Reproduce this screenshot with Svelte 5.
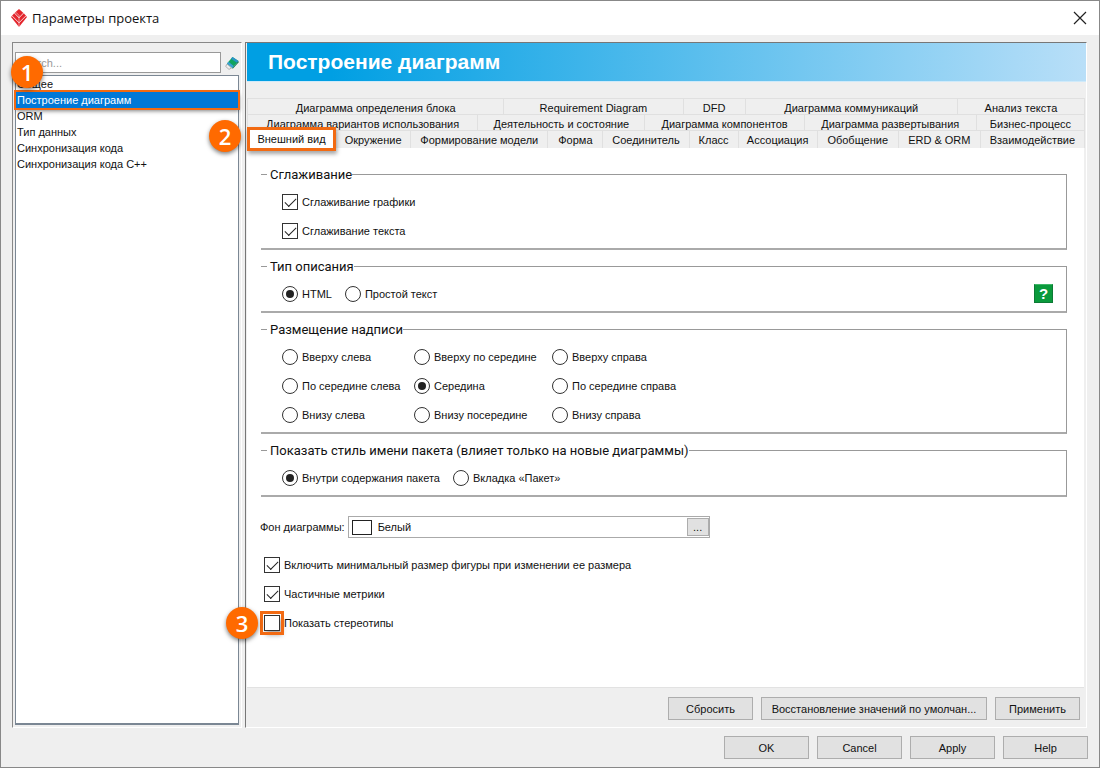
<script>
    let categories = ['Общее', 'Построение диаграмм', 'ORM', 'Тип данных', 'Синхронизация кода', 'Синхронизация кода C++'];
    let selectedCategory = 'Построение диаграмм';

    let tabRows = [
        ['Диаграмма определения блока', 'Requirement Diagram', 'DFD', 'Диаграмма коммуникаций', 'Анализ текста'],
        ['Диаграмма вариантов использования', 'Деятельность и состояние', 'Диаграмма компонентов', 'Диаграмма развертывания', 'Бизнес-процесс'],
        ['Внешний вид', 'Окружение', 'Формирование модели', 'Форма', 'Соединитель', 'Класс', 'Ассоциация', 'Обобщение', 'ERD & ORM', 'Взаимодействие']
    ];
    let selectedTab = 'Внешний вид';

    let positions = [
        'Вверху слева', 'Вверху по середине', 'Вверху справа',
        'По середине слева', 'Середина', 'По середине справа',
        'Внизу слева', 'Внизу посередине', 'Внизу справа'
    ];
    let position = 'Середина';
    let descriptionType = 'HTML';
    let packageStyle = 'Внутри содержания пакета';

    let search = '';
    let background = 'Белый';
    let graphicsAntialiasing = true;
    let textAntialiasing = true;
    let minimalSize = true;
    let partialMetrics = true;
    let showStereotypes = false;
</script>

<div class="window">
    <header class="titlebar">
        <svg class="logo" viewBox="0 0 16 18" aria-hidden="true">
            <path d="M8 0 L13 4.5 L16 8 L8 18 L0 8 L3 4.5 Z" fill="#e3262d" />
            <path d="M3.4 4 L8 8.8 L12.6 4 M1 6.8 L8 13.8 L15 6.8" fill="none" stroke="#fff" stroke-width="0.8" />
            <path d="M4.8 3.2 L8 6.4 V18" fill="none" stroke="#fff" stroke-width="0.5" />
        </svg>
        <h1>Параметры проекта</h1>
        <button class="close" aria-label="Close">
            <svg viewBox="0 0 14 14"><path d="M1 1 L13 13 M13 1 L1 13" stroke="#222" stroke-width="1.2" /></svg>
        </button>
    </header>

    <div class="body">
        <div class="panes">
            <aside class="sidebar">
                <div class="search">
                    <input type="text" placeholder="Search..." aria-label="Search" bind:value={search} />
                    <button class="clear" aria-label="Clear" on:click={() => search = ''}>
                        <svg viewBox="0 0 14 14">
                            <path d="M2 8 L0.7 10.5 L4 13.4 L6.5 12 Z" fill="#eee" stroke="#999" stroke-width="0.7" />
                            <path d="M2 7.5 L7.5 1 L13.5 5 L7.5 12 Z" fill="#0fa45f" />
                            <path d="M7.5 1 L13.5 5 L12 6.8 L6 2.8 Z" fill="#2a93c8" />
                            <path d="M2 7.5 L3.5 5.7 L9 10.2 L7.5 12 Z" fill="#3b9fd6" />
                            <path d="M13.5 5 L13.5 6.5 L7.5 13 L7.5 12 Z" fill="#08704a" />
                        </svg>
                    </button>
                </div>
                <span class="badge badge-list">1</span>
                <ul class="categories">
                    {#each categories as category}
                        <li class:selected={category === selectedCategory}>
                            <button on:click={() => selectedCategory = category}>{category}</button>
                        </li>
                    {/each}
                </ul>
            </aside>

            <main class="settings">
                <h2>{selectedCategory}</h2>

                <div class="tabs" role="tablist">
                    {#each tabRows as row, i}
                        <div class="tab-row row-{i + 1}">
                            {#each row as tab}
                                <div class="tab" class:active={tab === selectedTab}>
                                    <button role="tab" aria-selected={tab === selectedTab} on:click={() => selectedTab = tab}>{tab}</button>
                                    {#if tab === selectedTab}
                                        <span class="badge badge-tab">2</span>
                                    {/if}
                                </div>
                            {/each}
                        </div>
                    {/each}
                </div>

                <div class="content">
                    <fieldset>
                        <legend>Сглаживание</legend>
                        <div class="stack">
                            <label><input type="checkbox" bind:checked={graphicsAntialiasing} />Сглаживание графики</label>
                            <label><input type="checkbox" bind:checked={textAntialiasing} />Сглаживание текста</label>
                        </div>
                    </fieldset>

                    <fieldset>
                        <legend>Тип описания</legend>
                        <div class="line">
                            <label><input type="radio" name="description" value="HTML" bind:group={descriptionType} />HTML</label>
                            <label><input type="radio" name="description" value="Простой текст" bind:group={descriptionType} />Простой текст</label>
                            <button class="help" aria-label="Help on description type">?</button>
                        </div>
                    </fieldset>

                    <fieldset>
                        <legend>Размещение надписи</legend>
                        <div class="positions">
                            {#each positions as p}
                                <label><input type="radio" name="position" value={p} bind:group={position} />{p}</label>
                            {/each}
                        </div>
                    </fieldset>

                    <fieldset>
                        <legend>Показать стиль имени пакета (влияет только на новые диаграммы)</legend>
                        <div class="line">
                            <label><input type="radio" name="package" value="Внутри содержания пакета" bind:group={packageStyle} />Внутри содержания пакета</label>
                            <label><input type="radio" name="package" value="Вкладка «Пакет»" bind:group={packageStyle} />Вкладка «Пакет»</label>
                        </div>
                    </fieldset>

                    <div class="background">
                        <label for="background">Фон диаграммы:</label>
                        <div class="picker">
                            <span class="swatch"></span>
                            <input id="background" type="text" bind:value={background} />
                            <button aria-label="Choose colour">...</button>
                        </div>
                    </div>

                    <div class="stack options">
                        <label><input type="checkbox" bind:checked={minimalSize} />Включить минимальный размер фигуры при изменении ее размера</label>
                        <label><input type="checkbox" bind:checked={partialMetrics} />Частичные метрики</label>
                        <label class="marked">
                            <input type="checkbox" bind:checked={showStereotypes} />Показать стереотипы
                            <span class="badge badge-option">3</span>
                        </label>
                    </div>
                </div>

                <div class="actions inner">
                    <button>Сбросить</button>
                    <button class="wide">Восстановление значений по умолчан...</button>
                    <button>Применить</button>
                </div>
            </main>
        </div>

        <footer class="actions">
            <button>OK</button>
            <button>Cancel</button>
            <button>Apply</button>
            <button>Help</button>
        </footer>
    </div>
</div>

<style>
    :global(body) {
        margin: 0;
    }

    * {
        box-sizing: border-box;
    }

    .window {
        display: flex;
        flex-direction: column;
        min-height: 100vh;
        border: 1px solid #888;
        background: #efefef;
        color: #111;
        font-family: "Liberation Sans", Arial, sans-serif;
        font-size: 11px;
        line-height: 16px;
    }

    button,
    input {
        font: inherit;
        color: inherit;
    }

    button {
        margin: 0;
        padding: 0;
        border: 0;
        background: none;
    }

    .titlebar {
        display: flex;
        align-items: center;
        height: 34px;
        padding: 0 12px 0 10px;
        background: #fff;
    }

    .logo {
        width: 16px;
        height: 18px;
    }

    h1 {
        flex: 1;
        margin: 0 0 0 5px;
        font: 13px/20px "Open Sans", "Noto Sans", sans-serif;
    }

    .close,
    .close svg {
        display: block;
        width: 14px;
        height: 14px;
    }

    .body {
        display: flex;
        flex: 1;
        flex-direction: column;
        padding: 7px 11px 8px;
    }

    .panes {
        display: flex;
        flex: 1;
        gap: 3px;
        margin-right: 1px;
    }

    .sidebar {
        position: relative;
        display: flex;
        flex-direction: column;
        width: 230px;
        padding: 9px 2px 2px;
        border: 1px solid #888;
        border-right-color: #fff;
        border-bottom-color: #fff;
    }

    .search {
        display: flex;
        align-items: center;
        gap: 4px;
        margin-bottom: 2px;
    }

    .search input {
        flex: 1;
        min-width: 0;
        height: 21px;
        padding: 0 2px;
        border: 1px solid #999;
        background: #fff;
    }

    .search input::placeholder {
        color: #999;
        opacity: 1;
    }

    .clear,
    .clear svg {
        display: block;
        width: 14px;
        height: 14px;
    }

    .categories {
        flex: 1;
        margin: 0;
        padding: 0;
        border: 1px solid #7b8794;
        border-bottom-width: 2px;
        background: #fff;
        list-style: none;
    }

    .categories button {
        display: block;
        width: 100%;
        height: 16px;
        padding-left: 1px;
        text-align: left;
    }

    .categories .selected {
        background: #0078d7;
        color: #fff;
        outline: 2px solid #f26a12;
        box-shadow: 1px 3px 4px rgba(0, 0, 0, 0.5);
    }

    .badge {
        position: absolute;
        z-index: 2;
        width: 32px;
        height: 32px;
        border-radius: 50%;
        background: #ff6a00;
        box-shadow: 0 2px 4px rgba(0, 0, 0, 0.5);
        color: #fff;
        font: 600 22px/32px "Open Sans", "Noto Sans", sans-serif;
        text-align: center;
    }

    .badge-list {
        top: 13px;
        left: -2px;
    }

    .badge-tab {
        top: -10px;
        right: 100%;
        margin-right: 9px;
    }

    .badge-option {
        top: -8px;
        right: 100%;
        margin-right: 6px;
    }

    .settings {
        display: flex;
        flex: 1;
        flex-direction: column;
        min-width: 0;
        border: 1px solid #777;
        border-right-color: #fff;
        border-bottom-color: #fff;
        padding-left: 1px;
    }

    h2 {
        margin: 0;
        padding: 0 21px;
        border-bottom: 1px solid #cfeafa;
        background: linear-gradient(90deg, #009fe3 10%, #b9dff8);
        color: #fff;
        font-size: 21px;
        font-weight: bold;
        line-height: 38px;
    }

    .tabs {
        margin: 16px 1px 0 0;
    }

    .tab-row {
        display: grid;
        border-left: 1px solid #e0e0e0;
    }

    .row-1 {
        grid-template-columns: 256fr 179fr 62fr 212fr 127fr;
    }

    .row-2 {
        grid-template-columns: 230fr 167fr 159fr 172fr 108fr;
    }

    .row-3 {
        grid-template-columns: 88fr 75fr 137fr 55fr 86fr 49fr 79fr 81fr 82fr 104fr;
    }

    .tab {
        position: relative;
        height: 16px;
        border-top: 1px solid #e0e0e0;
        border-right: 1px solid #e0e0e0;
        background: #efefef;
    }

    .row-3 .tab {
        height: 18px;
    }

    .tab button {
        display: block;
        width: 100%;
        height: 18px;
        line-height: 18px;
        white-space: nowrap;
    }

    .row-3 .tab.active {
        z-index: 1;
        height: 24px;
        margin: -3px 0 -3px -1px;
        border: 3px solid #f26a12;
        background: #fff;
        box-shadow: 1px 3px 4px rgba(0, 0, 0, 0.35);
    }

    .content {
        flex: 1;
        margin-right: 2px;
        padding: 17px 17px 20px 14px;
        border-bottom: 1px solid #e2e2e2;
        background: #fff;
    }

    fieldset {
        min-width: 0;
        margin: 0 0 7px;
        padding: 11px 13px 9px 6px;
        border: solid #999;
        border-width: 1px 1px 2px 0;
        border-bottom-color: #aaa;
    }

    legend {
        padding: 2px 0 0 3px;
        font: 13px/16px Roboto, "Noto Sans", sans-serif;
    }

    .stack {
        display: flex;
        flex-direction: column;
        align-items: flex-start;
        gap: 13px;
    }

    fieldset > div {
        padding-left: 15px;
    }

    label {
        display: flex;
        align-items: center;
        gap: 4px;
        white-space: nowrap;
    }

    .line {
        display: flex;
        gap: 13px;
    }

    .positions {
        display: grid;
        grid-template-columns: 132px 138px 1fr;
        row-gap: 13px;
    }

    input[type="checkbox"],
    input[type="radio"] {
        flex: none;
        width: 16px;
        height: 16px;
        margin: 0;
        border: 1px solid #333;
        background: #fff;
        appearance: none;
    }

    input[type="checkbox"]:checked::before {
        display: block;
        width: 10px;
        height: 5px;
        margin: 3px 2px;
        border: solid #222;
        border-width: 0 0 1px 1px;
        content: "";
        transform: rotate(-45deg);
    }

    input[type="radio"] {
        border-radius: 50%;
    }

    input[type="radio"]:checked::before {
        display: block;
        width: 8px;
        height: 8px;
        margin: 3px;
        border-radius: 50%;
        background: #222;
        content: "";
    }

    .help {
        width: 19px;
        height: 19px;
        margin: -2px 0 -1px auto;
        border: 1px solid #0c7a35;
        border-top-color: #3fb768;
        background: #0a9a3c;
        color: #fff;
        font-size: 15px;
        font-weight: bold;
        line-height: 17px;
    }

    .background {
        display: flex;
        align-items: center;
        gap: 3px;
        margin: 19px 0;
    }

    .background label {
        margin-left: -1px;
    }

    .picker {
        display: flex;
        align-items: center;
        width: 362px;
        height: 22px;
        padding-left: 3px;
        border: 1px solid #aaa;
        background: #fff;
    }

    .swatch {
        width: 20px;
        height: 15px;
        border: 1px solid #222;
    }

    .picker input {
        flex: 1;
        min-width: 0;
        padding: 0 6px;
        border: 0;
        background: none;
    }

    .picker button {
        width: 22px;
        height: 18px;
        border: 1px solid #adadad;
        background: #e1e1e1;
    }

    .options {
        padding-left: 3px;
    }

    .marked {
        position: relative;
    }

    .marked input {
        outline: 3px solid #f26a12;
        outline-offset: 1px;
        box-shadow: 2px 4px 5px rgba(0, 0, 0, 0.35);
    }

    .actions {
        display: flex;
        justify-content: flex-end;
        gap: 8px;
        padding-top: 8px;
    }

    .inner {
        padding: 9px 6px 7px;
    }

    .actions button {
        min-width: 85px;
        height: 23px;
        border: 1px solid #adadad;
        background: #e1e1e1;
    }

    .actions .wide {
        min-width: 226px;
    }
</style>
